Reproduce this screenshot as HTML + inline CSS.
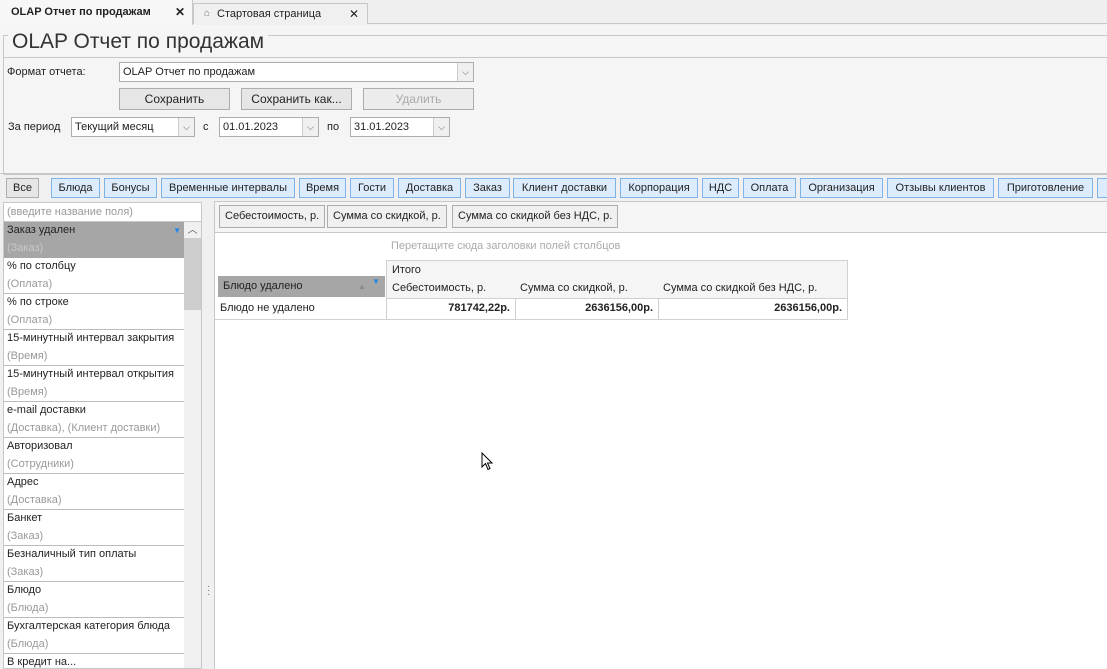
<!DOCTYPE html>
<html><head><meta charset="utf-8"><style>
*{box-sizing:border-box;margin:0;padding:0}
html,body{width:1107px;height:669px;overflow:hidden}
body{background:#f0f0f0;font-family:"Liberation Sans",Arial,sans-serif;font-size:11px;color:#222;position:relative;white-space:nowrap}
.a{position:absolute}
.btn{position:absolute;height:22px;border:1px solid #adadad;background:#e6e6e6;text-align:center;line-height:20px;font-size:12px}
.cb{position:absolute;height:20px;border:1px solid #adadad;background:#fff;line-height:18px;padding-left:3px;font-size:11px}
.cb .ar{position:absolute;right:0;top:0;width:16px;height:18px;border-left:1px solid #ccc;background:#f0f0f0;text-align:center;color:#555;font-size:9px;line-height:18px}
.cat{position:absolute;top:178px;height:20px;border:1px solid #7eb4ea;background:#dcecfc;line-height:18px;text-align:center;font-size:11px;overflow:hidden}
.item{position:absolute;left:0;width:180px;height:36px;border-bottom:1px solid #bcbcbc;background:#fff;padding-left:3px}
.item div{height:18px;line-height:17px}
.item .s{color:#999}
.fb{position:absolute;top:205px;height:23px;border:1px solid #adadad;background:#f0f0f0;line-height:21px;padding:0 5px;font-size:11px}
.c{position:absolute;border-right:1px solid #d0d0d0;border-bottom:1px solid #d0d0d0;padding:0 5px;line-height:19px}
</style></head><body>
<div class="a" style="left:0;top:0;width:1107px;height:24px;background:#efefef;border-bottom:1px solid #c8c8c8"></div>
<div class="a" style="left:0;top:0;width:193px;height:25px;background:#f7f7f7;border-right:1px solid #c8c8c8;font-weight:bold;font-size:11px;line-height:24px;padding-left:11px">OLAP Отчет по продажам<span style="position:absolute;left:175px;font-size:12px">✕</span></div>
<div class="a" style="left:193px;top:3px;width:175px;height:21px;background:#f0f0f0;border:1px solid #c8c8c8;border-bottom:none;line-height:20px;padding-left:23px;font-size:11px"><span style="position:absolute;left:10px;color:#777;font-size:10px">⌂</span>Стартовая страница<span style="position:absolute;left:155px;font-size:12px">✕</span></div>
<div class="a" style="left:0;top:25px;width:1107px;height:150px;background:#f5f5f5"></div>
<div class="a" style="left:3px;top:35px;width:1104px;height:140px;border:1px solid #c8c8c8;border-right:none"></div>
<div class="a" style="left:3px;top:57px;width:1104px;height:1px;background:#c8c8c8"></div>
<div class="a" style="left:8px;top:28px;background:#f5f5f5;padding:0 4px;font-family:'Liberation Sans',sans-serif;font-size:21px;color:#333;line-height:28px">OLAP Отчет по продажам</div>
<div class="a" style="left:7px;top:66px;font-size:11px">Формат отчета:</div>
<div class="cb" style="left:119px;top:62px;width:355px">OLAP Отчет по продажам<span class="ar">⌵</span></div>
<div class="btn" style="left:119px;top:88px;width:111px">Сохранить</div>
<div class="btn" style="left:241px;top:88px;width:111px">Сохранить как...</div>
<div class="btn" style="left:363px;top:88px;width:111px;color:#aaa;background:#ececec">Удалить</div>
<div class="a" style="left:8px;top:121px">За период</div>
<div class="cb" style="left:71px;top:117px;width:124px">Текущий месяц<span class="ar">⌵</span></div>
<div class="a" style="left:203px;top:121px">с</div>
<div class="cb" style="left:219px;top:117px;width:100px">01.01.2023<span class="ar">⌵</span></div>
<div class="a" style="left:327px;top:121px">по</div>
<div class="cb" style="left:350px;top:117px;width:100px">31.01.2023<span class="ar">⌵</span></div>
<div class="a" style="left:0;top:173px;width:1107px;height:1px;background:#c8c8c8"></div>
<div class="cat" style="left:6px;width:33px;border-color:#adadad;background:#e6e6e6">Все</div>
<div class="cat" style="left:51px;width:49px">Блюда</div>
<div class="cat" style="left:104px;width:53px">Бонусы</div>
<div class="cat" style="left:161px;width:134px">Временные интервалы</div>
<div class="cat" style="left:299px;width:47px">Время</div>
<div class="cat" style="left:350px;width:44px">Гости</div>
<div class="cat" style="left:398px;width:63px">Доставка</div>
<div class="cat" style="left:465px;width:45px">Заказ</div>
<div class="cat" style="left:513px;width:103px">Клиент доставки</div>
<div class="cat" style="left:620px;width:78px">Корпорация</div>
<div class="cat" style="left:702px;width:37px">НДС</div>
<div class="cat" style="left:743px;width:53px">Оплата</div>
<div class="cat" style="left:800px;width:83px">Организация</div>
<div class="cat" style="left:887px;width:107px">Отзывы клиентов</div>
<div class="cat" style="left:998px;width:95px">Приготовление</div>
<div class="cat" style="left:1097px;width:30px"></div>
<div class="a" style="left:3px;top:202px;width:199px;height:467px;border:1px solid #c8c8c8;background:#fff;overflow:hidden">
<div class="a" style="left:0;top:0;width:197px;height:19px;border-bottom:1px solid #c8c8c8;color:#999;line-height:18px;padding-left:3px">(введите название поля)</div>
<div class="item" style="top:19px;background:#a6a6a6;border-color:#a6a6a6"><div>Заказ удален<span style="position:absolute;right:3px;color:#1e88e5;font-size:8px">▼</span></div><div class="s" style="color:#c8c8c8">(Заказ)</div></div>
<div class="item" style="top:55px"><div>% по столбцу</div><div class="s">(Оплата)</div></div>
<div class="item" style="top:91px"><div>% по строке</div><div class="s">(Оплата)</div></div>
<div class="item" style="top:127px"><div>15-минутный интервал закрытия</div><div class="s">(Время)</div></div>
<div class="item" style="top:163px"><div>15-минутный интервал открытия</div><div class="s">(Время)</div></div>
<div class="item" style="top:199px"><div>e-mail доставки</div><div class="s">(Доставка), (Клиент доставки)</div></div>
<div class="item" style="top:235px"><div>Авторизовал</div><div class="s">(Сотрудники)</div></div>
<div class="item" style="top:271px"><div>Адрес</div><div class="s">(Доставка)</div></div>
<div class="item" style="top:307px"><div>Банкет</div><div class="s">(Заказ)</div></div>
<div class="item" style="top:343px"><div>Безналичный тип оплаты</div><div class="s">(Заказ)</div></div>
<div class="item" style="top:379px"><div>Блюдо</div><div class="s">(Блюда)</div></div>
<div class="item" style="top:415px"><div>Бухгалтерская категория блюда</div><div class="s">(Блюда)</div></div>
<div class="item" style="top:451px"><div>В кредит на...</div></div>
<div class="a" style="left:180px;top:19px;width:17px;height:447px;background:#f0f0f0"></div>
<div class="a" style="left:180px;top:19px;width:17px;height:16px;text-align:center;color:#555;font-size:10px;line-height:18px">︿</div>
<div class="a" style="left:180px;top:35px;width:17px;height:72px;background:#cdcdcd"></div>
</div>
<div class="a" style="left:207px;top:585px;color:#777;font-size:10px;line-height:4px">·<br>·<br>·</div>
<div class="a" style="left:214px;top:201px;width:893px;height:468px;background:#f5f5f5;border-left:1px solid #c8c8c8;border-top:1px solid #c8c8c8"></div>
<div class="fb" style="left:219px">Себестоимость, р.</div>
<div class="fb" style="left:327px">Сумма со скидкой, р.</div>
<div class="fb" style="left:452px">Сумма со скидкой без НДС, р.</div>
<div class="a" style="left:214px;top:232px;width:893px;height:437px;background:#fff;border-top:1px solid #c8c8c8;border-left:1px solid #c8c8c8"></div>
<div class="a" style="left:391px;top:240px;color:#aaa">Перетащите сюда заголовки полей столбцов</div>
<div class="c" style="left:386px;top:260px;width:462px;height:20px;background:#f5f5f5;border-left:1px solid #d0d0d0;border-top:1px solid #d0d0d0">Итого</div>
<div class="c" style="left:386px;top:279px;width:130px;height:20px;background:#f5f5f5;border-left:1px solid #d0d0d0">Себестоимость, р.</div>
<div class="c" style="left:515px;top:279px;width:144px;height:20px;background:#f5f5f5">Сумма со скидкой, р.</div>
<div class="c" style="left:658px;top:279px;width:190px;height:20px;background:#f5f5f5">Сумма со скидкой без НДС, р.</div>
<div class="a" style="left:218px;top:276px;width:167px;height:21px;background:#a6a6a6;line-height:21px;padding-left:5px">Блюдо удалено<span style="position:absolute;left:140px;color:#888;font-size:8px">▲</span><span style="position:absolute;left:154px;top:-5px;color:#1e88e5;font-size:8px">▼</span></div>
<div class="c" style="left:215px;top:299px;width:172px;height:21px">Блюдо не удалено</div>
<div class="c" style="left:386px;top:299px;width:130px;height:21px;text-align:right;font-weight:bold">781742,22р.</div>
<div class="c" style="left:515px;top:299px;width:144px;height:21px;text-align:right;font-weight:bold">2636156,00р.</div>
<div class="c" style="left:658px;top:299px;width:190px;height:21px;text-align:right;font-weight:bold">2636156,00р.</div>
<svg class="a" style="left:481px;top:452px" width="12" height="19" viewBox="0 0 12 19"><path d="M1 1 L1 15 L4.5 11.5 L7 17.5 L9 16.5 L6.5 11 L11 11 Z" fill="#fff" stroke="#000" stroke-width="1"/></svg>
</body></html>
